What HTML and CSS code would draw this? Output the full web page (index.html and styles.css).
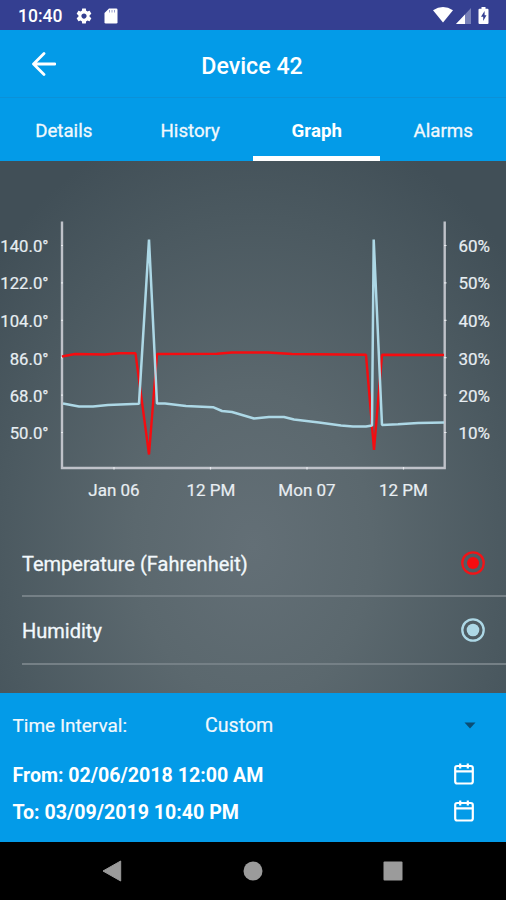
FILE: index.html
```html
<!DOCTYPE html>
<html lang="en">
<head>
<meta charset="utf-8">
<title>Device 42</title>
<link rel="stylesheet" href="styles.css">
</head>
<body>
<div class="status">
  <span class="clock">10:40</span>
  <svg class="gear" width="18" height="18" viewBox="0 0 24 24"><path fill="#fff" d="M19.43 12.98c.04-.32.07-.64.07-.98s-.03-.66-.07-.98l2.11-1.65c.19-.15.24-.42.12-.64l-2-3.46c-.12-.22-.39-.3-.61-.22l-2.49 1c-.52-.4-1.08-.73-1.69-.98l-.38-2.65C14.46 2.18 14.25 2 14 2h-4c-.25 0-.46.18-.49.42l-.38 2.65c-.61.25-1.17.59-1.69.98l-2.49-1c-.23-.09-.49 0-.61.22l-2 3.46c-.13.22-.07.49.12.64l2.11 1.65c-.04.32-.07.65-.07.98s.03.66.07.98l-2.11 1.65c-.19.15-.24.42-.12.64l2 3.46c.12.22.39.3.61.22l2.49-1c.52.4 1.08.73 1.69.98l.38 2.65c.03.24.24.42.49.42h4c.25 0 .46-.18.49-.42l.38-2.65c.61-.25 1.17-.59 1.69-.98l2.49 1c.23.09.49 0 .61-.22l2-3.46c.12-.22.07-.49-.12-.64l-2.11-1.65zM12 15.5c-1.93 0-3.5-1.57-3.5-3.5s1.57-3.5 3.5-3.5 3.5 1.57 3.5 3.5-1.57 3.5-3.5 3.5z"/></svg>
  <svg class="sd" width="14" height="16" viewBox="0 0 14 16"><path fill="#fff" d="M5 .5h7.2q1.3 0 1.3 1.3v12.4q0 1.3-1.3 1.3H1.8Q.5 15.500.5 14.200V5z"/><path stroke="#9aa0cf" stroke-width="1" d="M5.500 2v2.500M8 2v2.500M10.500 2v2.500"/></svg>
  <svg class="wifi" width="20" height="16" viewBox="0 0 20 16"><path fill="#fff" d="M0 3.200Q10-3 20 3.200L10 15.500z"/></svg>
  <svg class="cell" width="15" height="16" viewBox="0 0 15 16"><path fill="#7780b8" d="M15 0v16H0z"/><path fill="#fff" d="M9 6.400V16H0z"/></svg>
  <svg class="battery" width="11" height="17" viewBox="0 0 11 17"><path fill="#fff" d="M3.500 0h4v1.700h2q1 0 1 1V16q0 1-1 1h-8q-1 0-1-1V2.700q0-1 1-1h2z"/><path fill="#343f91" d="M6.600 4 3 9.800h2.200V14L8.500 8.200H6.600z"/></svg>
</div>
<header class="bar">
  <svg class="back" width="24" height="24" viewBox="0 0 24 24" fill="none" stroke="#fff" stroke-width="2.800" stroke-linecap="round" stroke-linejoin="round"><path d="M12 1.500 1.500 12 12 22.500M2 12h21"/></svg>
  <h1>Device 42</h1>
</header>
<nav class="tabs">
  <span class="tab">Details</span><span class="tab">History</span><span class="tab active">Graph</span><span class="tab">Alarms</span>
</nav>
<main>
  <svg class="chart" width="506" height="360" viewBox="0 161 506 360">
    <g class="ylabels" text-anchor="end">
      <text x="48.500" y="252">140.0°</text><text x="48.500" y="289.400">122.0°</text><text x="48.500" y="326.800">104.0°</text><text x="48.500" y="364.600">86.0°</text><text x="48.500" y="401.600">68.0°</text><text x="48.500" y="439">50.0°</text>
    </g>
    <g>
      <text x="458.500" y="252">60%</text><text x="458.500" y="289.400">50%</text><text x="458.500" y="326.800">40%</text><text x="458.500" y="364.600">30%</text><text x="458.500" y="401.600">20%</text><text x="458.500" y="439">10%</text>
    </g>
    <g text-anchor="middle">
      <text x="114" y="496.300">Jan 06</text><text x="211" y="496.300">12 PM</text><text x="307" y="496.300">Mon 07</text><text x="403.500" y="496.300">12 PM</text>
    </g>
    <g fill="none">
      <path stroke="#bfc2c9" stroke-width="2.400" d="M62 221.500V468H444.700V221.500"/>
      <path stroke="#e8eaee" stroke-width="1.200" d="M61 245.500h2m-2 37.400h2m-2 37.400h2m-2 37.400h2m-2 37.400h2m-2 37.400h2M444 245.500h2.500m-2.500 37.400h2.500m-2.500 37.400h2.500m-2.500 37.400h2.500m-2.500 37.400h2.500m-2.500 37.400h2.500M114 467v2.500m96.500-2.500v2.500m96.500-2.500v2.500m96.500-2.500v2.500"/>
      <path stroke="#f50c10" stroke-width="2.400" stroke-linejoin="bevel" d="M62 356.500 75 354 105 354.500 119 353.300H135.500L149 454.500 157 354 217 353.800 232 352.500H268L292 354 366 354.800 374 450 382 354.800 444 355"/>
      <path stroke="#add8e6" stroke-width="2.500" stroke-linejoin="bevel" d="M63 403.500 79 406.500H93L108 405 139 403.700 149 239.500 157 403.500H165L186 406 213 407.200 222 411 232 412 254 418.500 269 417H284L294 419.500 319 422.500 341 425.500 353 426.500H366L372 425.500 373.700 239.500 382 425 398 424.200 418 423 444 422.500"/>
    </g>
  </svg>
  <div class="series">
    <span>Temperature (Fahrenheit)</span>
    <svg width="24" height="24" viewBox="0 0 24 24"><circle cx="12" cy="12" r="10.700" fill="none" stroke="#f01418" stroke-width="2.300"/><circle cx="12" cy="12" r="6" fill="#f50c10"/></svg>
  </div>
  <div class="series humid">
    <span>Humidity</span>
    <svg width="24" height="24" viewBox="0 0 24 24"><circle cx="12" cy="12" r="10.700" fill="none" stroke="#add8e6" stroke-width="2.300"/><circle cx="12" cy="12" r="6.300" fill="#add8e6"/></svg>
  </div>
</main>
<section class="range">
  <div class="interval"><span class="label">Time Interval:</span><span class="value">Custom</span><svg width="12" height="7" viewBox="0 0 12 7"><path fill="#0b4d74" d="M.5.500h11L6 6.500z"/></svg></div>
  <div class="date"><span>From: 02/06/2018 12:00 AM</span>
    <svg width="20" height="22" viewBox="0 0 20 22" fill="none" stroke="#fff" stroke-width="2.200"><rect x="1.200" y="3" width="17.600" height="17.500" rx="2"/><path d="M1 8.300h18M6.200.500V5.500M13.800.500V5.500"/></svg></div>
  <div class="date"><span>To: 03/09/2019 10:40 PM</span>
    <svg width="20" height="22" viewBox="0 0 20 22" fill="none" stroke="#fff" stroke-width="2.200"><rect x="1.200" y="3" width="17.600" height="17.500" rx="2"/><path d="M1 8.300h18M6.200.500V5.500M13.800.500V5.500"/></svg></div>
</section>
<footer class="system">
  <svg width="20" height="22" viewBox="0 0 20 22"><path fill="#9b9b9b" d="M18.700 1v20L1 11z" stroke="#9b9b9b" stroke-linejoin="round"/></svg>
  <svg width="20" height="20" viewBox="0 0 20 20"><circle cx="10" cy="10" r="9.500" fill="#9b9b9b"/></svg>
  <svg width="20" height="20" viewBox="0 0 20 20"><rect x=".5" y=".5" width="19" height="19" rx="1" fill="#9b9b9b"/></svg>
</footer>
</body>
</html>
```
FILE: styles.css
```css
* { box-sizing: border-box; }
body {
  margin: 0;
  width: 506px;
  height: 900px;
  display: flex;
  flex-direction: column;
  overflow: hidden;
  font-family: Roboto, sans-serif;
  color: #f2f8fc;
  background: #000;
}
svg { display: block; flex: none; }
.status {
  height: 30px;
  flex: none;
  display: flex;
  align-items: center;
  padding: 1px 17px 0 18px;
  background: #343f91;
}
.clock { font-size: 17.500px; font-weight: 500; width: 57px; color: #fff; }
.sd { margin-left: 11px; }
.wifi { margin-left: auto; margin-top: -2px; }
.cell { margin-left: 3px; }
.battery { margin-left: 7px; }
.bar {
  height: 68px;
  flex: none;
  display: grid;
  grid-template-columns: 56px 1fr 56px;
  align-items: center;
  padding-top: 4px;
  background: #039be8;
  border-bottom: 1px solid #0b91d8;
}
.back { margin: -3px 0 0 32px; }
.bar h1 { margin: 0 1px 0 -1px; text-align: center; font-size: 23.200px; font-weight: 500; color: #fff; }
.tabs {
  height: 62.500px;
  flex: none;
  display: grid;
  grid-template-columns: repeat(4, 1fr);
  background: #039be8;
}
.tab {
  display: flex;
  align-items: center;
  justify-content: center;
  padding: 9px 0 0 1px;
  font-size: 18.700px;
  -webkit-text-stroke: .3px currentColor;
  border-bottom: 5px solid transparent;
}
.tab.active { font-weight: 700; border-color: #fff; color: #fff; -webkit-text-stroke: 0; }
main {
  height: 532.500px;
  flex: none;
  background: radial-gradient(ellipse 340px 440px at 253px 385px, #636f76 0%, #5b686e 35%, #4b5960 75%, #414f57 100%);
}
.chart text { font-size: 17px; fill: #e8eef2; stroke: #e8eef2; stroke-width: .2px; }
.chart .ylabels text { font-size: 16.700px; }
.series {
  height: 76px;
  margin-left: 22px;
  padding: 12px 21px 0 0;
  display: flex;
  align-items: center;
  justify-content: space-between;
  font-size: 20px;
  -webkit-text-stroke: .3px currentColor;
  border-bottom: 2px solid #758086;
}
.series svg { margin-top: -1px; }
.series.humid { height: 68px; padding-top: 2px; }
.range { height: 149px; flex: none; padding: 14px 32px 0 12.500px; background: #039be8; }
.interval { height: 37px; display: flex; align-items: center; font-size: 19px; margin-right: -7px; -webkit-text-stroke: .2px currentColor; }
.label { width: 192.500px; }
.value { flex: 1; font-size: 19.600px; }
.interval svg { margin: -1px 5px 0 0; }
.date {
  height: 37px;
  display: flex;
  align-items: center;
  justify-content: space-between;
  font-size: 19.600px;
  font-weight: 700;
  color: #fff;
}
.date span { padding-top: 1px; }
.date svg { margin-top: -2px; }
.interval + .date { margin-top: 12px; }
.system {
  height: 58px;
  flex: none;
  display: flex;
  align-items: center;
  justify-content: space-between;
  padding: 0 103px 0 102px;
  background: #000;
}
```
